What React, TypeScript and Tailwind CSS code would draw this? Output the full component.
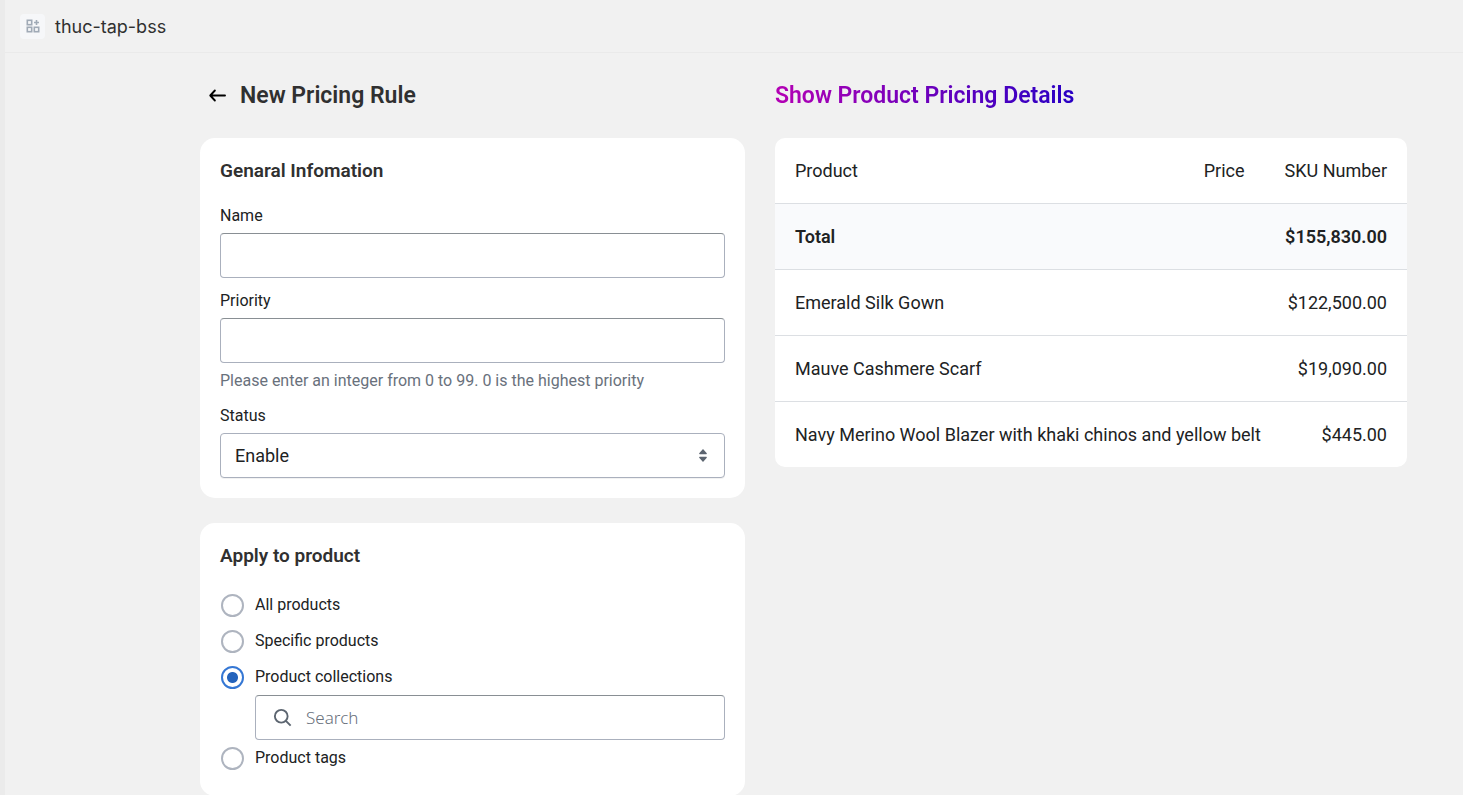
import { useState } from 'react'

const products = [
  { name: 'Emerald Silk Gown', amount: '$122,500.00' },
  { name: 'Mauve Cashmere Scarf', amount: '$19,090.00' },
  { name: 'Navy Merino Wool Blazer with khaki chinos and yellow belt', amount: '$445.00' },
]

function AppIcon() {
  return (
    <span className="flex size-[25px] items-center justify-center rounded bg-[#f6f7f9]">
      <svg viewBox="0 0 14 14" className="size-[14px]" fill="none" stroke="#a0aab6" strokeWidth="1.6" aria-hidden="true">
        <rect x="1.3" y="1.3" width="4.4" height="4.4" />
        <rect x="1.3" y="8.3" width="4.4" height="4.4" />
        <rect x="8.3" y="8.3" width="4.4" height="4.4" />
        <path d="M10.5 1v5M8 3.5h5" />
      </svg>
    </span>
  )
}

function BackIcon() {
  return (
    <svg viewBox="0 0 20 20" className="size-[25px]" fill="none" stroke="#000" strokeWidth="1.5" strokeLinecap="round" strokeLinejoin="round" aria-hidden="true">
      <path d="M16 10H4.5M7.9 6 4.200 10l3.700 4" />
    </svg>
  )
}

function TextField({ id, label, help }: { id: string; label: string; help?: string }) {
  return (
    <div className="flex flex-col gap-[5px]">
      <label htmlFor={id} className="text-[16px] leading-[25px]">{label}</label>
      <input id={id} type="text" className="h-[45px] w-full rounded border border-[#aab0bd] border-t-[#898f94] bg-white px-[14px] text-[18px] outline-none" />
      {help && <p className="text-[16px] leading-[25px] text-[#69717c]">{help}</p>}
    </div>
  )
}

function RadioRow({ label, checked, onSelect }: { label: string; checked: boolean; onSelect: () => void }) {
  return (
    <label className="flex h-9 items-center gap-[11px] pl-px text-[16px] leading-[26px]">
      <input
        type="radio"
        name="apply-to"
        checked={checked}
        onChange={onSelect}
        className="size-[23px] shrink-0 appearance-none rounded-full border-2 border-[#aeb4bf] bg-white checked:border-[#3577d4] checked:bg-[radial-gradient(circle,#2463bc_5px,white_6px)]"
      />
      {label}
    </label>
  )
}

export default function App() {
  const [target, setTarget] = useState('collections')
  return (
    <div className="min-h-screen border-l-[5px] border-[#ebebeb] bg-[#f1f1f1] font-['Roboto','Liberation_Sans',sans-serif] text-[#202223]">
      <header className="flex h-[53px] items-center gap-[10px] border-b border-[#eaeaea] px-[15px] font-['Inter',sans-serif] text-[18px] leading-[25px] text-[#303030]">
        <AppIcon />
        thuc-tap-bss
      </header>
      <main className="grid grid-cols-[545fr_632fr] items-start gap-x-[30px] pt-[25px] pr-14 pl-[195px]">
        <section className="flex flex-col gap-[25px]">
          <div className="flex h-[35px] items-center gap-[10px] pl-[5px]">
            <button type="button" aria-label="Back"><BackIcon /></button>
            <h1 className="text-[23px] leading-[35px] font-semibold text-[#303030]">New Pricing Rule</h1>
          </div>

          <div className="rounded-[15px] bg-white p-5">
            <h2 className="mb-5 text-[19px] leading-[25px] font-semibold text-[#303030]">Genaral Infomation</h2>
            <div className="flex flex-col gap-[10px]">
              <TextField id="name" label="Name" />
              <TextField id="priority" label="Priority" help="Please enter an integer from 0 to 99. 0 is the highest priority" />
              <div className="flex flex-col gap-[5px]">
                <label htmlFor="status" className="text-[16px] leading-[25px]">Status</label>
                <div className="relative">
                  <select id="status" className="h-[45px] w-full appearance-none rounded border border-[#aab0bd] bg-white px-[14px] text-[18px] shadow-[0_1px_0_rgba(0,0,0,0.05)] outline-none">
                    <option>Enable</option>
                    <option>Disable</option>
                  </select>
                  <svg viewBox="0 0 8 13" className="pointer-events-none absolute top-4 right-[18px] h-[13px] w-2" fill="#5c6570" aria-hidden="true">
                    <path d="M4 0 7.8 4.200Q8 5.200 7.200 5.200H.8Q0 5.200 .2 4.200ZM4 13 .2 8.800Q0 7.800 .8 7.800H7.200Q8 7.800 7.800 8.800Z" />
                  </svg>
                </div>
              </div>
            </div>
          </div>

          <fieldset className="rounded-[15px] bg-white p-5">
            <h2 className="mb-[19px] text-[19px] leading-[25px] font-semibold text-[#303030]">Apply to product</h2>
            <RadioRow label="All products" checked={target === 'all'} onSelect={() => setTarget('all')} />
            <RadioRow label="Specific products" checked={target === 'specific'} onSelect={() => setTarget('specific')} />
            <RadioRow label="Product collections" checked={target === 'collections'} onSelect={() => setTarget('collections')} />
            {target === 'collections' && (
              <div className="ml-[35px] flex h-[45px] items-center gap-[11px] rounded border border-[#aab0bd] border-t-[#898f94] bg-white px-[14px]">
                <svg viewBox="0 0 20 20" className="size-[25px] shrink-0" fill="none" stroke="#5c6570" strokeWidth="1.500" aria-hidden="true">
                  <circle cx="9" cy="9" r="5.100" />
                  <path d="m12.700 12.700 3.800 3.800" />
                </svg>
                <input type="search" aria-label="Search collections" placeholder="Search" className="min-w-0 flex-1 bg-transparent font-['Noto_Sans',sans-serif] text-[17px] font-light outline-none placeholder:text-[#69717c]" />
              </div>
            )}
            <RadioRow label="Product tags" checked={target === 'tags'} onSelect={() => setTarget('tags')} />
          </fieldset>
        </section>

        <section className="flex flex-col gap-[25px]">
          <div className="flex h-[35px] items-center">
            <h1 className="bg-linear-to-r/srgb from-[#b400b4] to-[#2800c4] bg-clip-text text-[23px] leading-[35px] font-semibold text-transparent">Show Product Pricing Details</h1>
          </div>
          <div className="overflow-hidden rounded-[10px] bg-white">
            <table className="w-full border-collapse text-[18px] leading-[25px]">
              <thead>
                <tr className="border-b border-[#dcdfe3]">
                  <th scope="col" className="p-5 text-left font-normal">Product</th>
                  <th scope="col" className="p-5 text-right font-normal">Price</th>
                  <th scope="col" className="w-[140px] p-5 text-right font-normal whitespace-nowrap">SKU Number</th>
                </tr>
              </thead>
              <tbody>
                <tr className="border-b border-[#dcdfe3] bg-[#f9fafc]">
                  <th scope="row" colSpan={2} className="py-5 pl-5 text-left font-semibold">Total</th>
                  <td className="p-5 text-right font-semibold">$155,830.00</td>
                </tr>
                {products.map((product) => (
                  <tr key={product.name} className="border-b border-[#dcdfe3] last:border-b-0">
                    <th scope="row" colSpan={2} className="py-5 pl-5 text-left font-normal">{product.name}</th>
                    <td className="p-5 text-right">{product.amount}</td>
                  </tr>
                ))}
              </tbody>
            </table>
          </div>
        </section>
      </main>
    </div>
  )
}
